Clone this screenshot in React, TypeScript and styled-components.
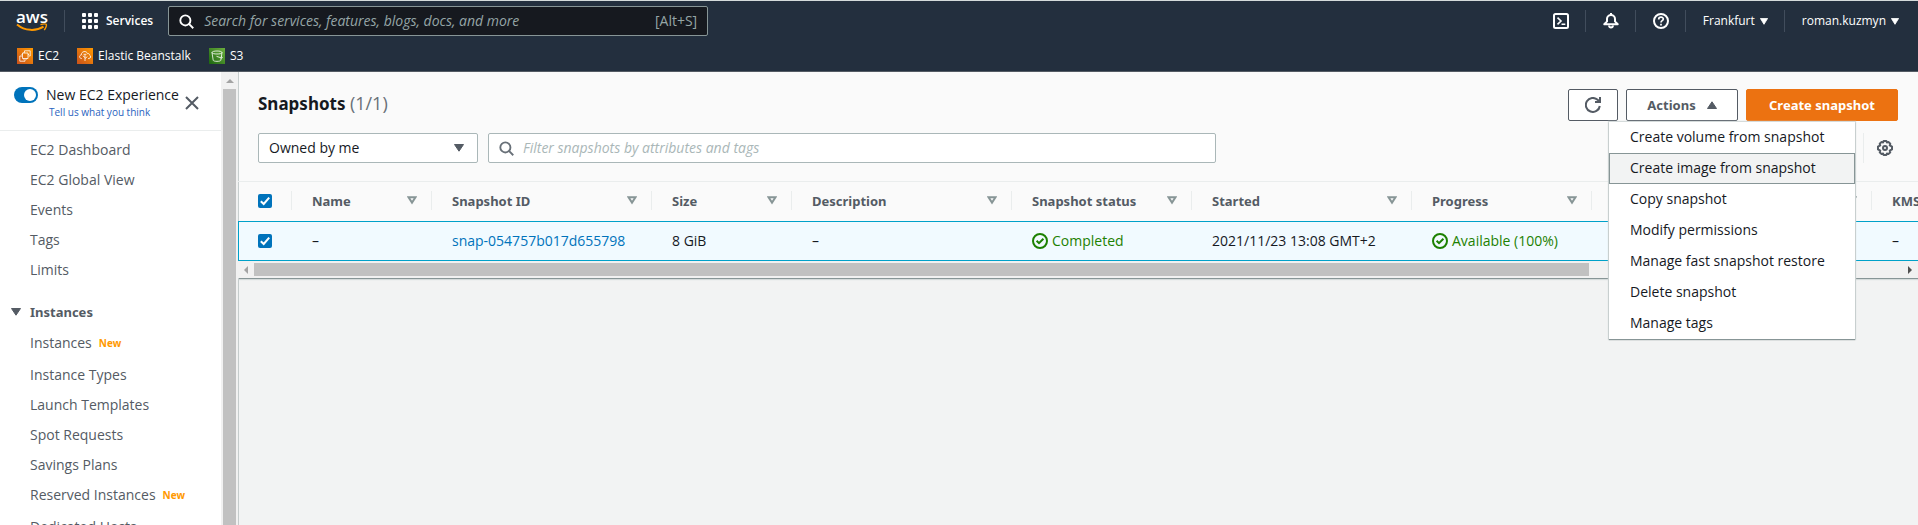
import React from "react";
import styled, { createGlobalStyle, css } from "styled-components";

const GlobalStyle = createGlobalStyle`
  *, *::before, *::after { box-sizing: border-box; }
  html, body { margin: 0; padding: 0; }
  body {
    font-family: "Open Sans", "Noto Sans", sans-serif;
    font-size: 14px;
    line-height: 20px;
    color: #16191f;
    background: #f2f3f3;
    overflow: hidden;
  }
  button, input, select { font: inherit; color: inherit; }
  button { cursor: pointer; }
  a { text-decoration: none; }
  svg { display: block; flex: none; }
`;

const strongText = css`
  font-family: "Noto Sans", "Open Sans", sans-serif;
  font-size: 13px;
  font-weight: 700;
`;

const Page = styled.div`
  display: flex;
  flex-direction: column;
  height: 100vh;
`;

/* ---------- Top navigation ---------- */

const Header = styled.header`
  flex: none;
  background: #232f3e;
  color: #ffffff;
  border-top: 1px solid #d5dbdb;
  border-bottom: 1px solid #545b64;
`;

const NavBar = styled.div`
  display: flex;
  align-items: center;
  justify-content: space-between;
  height: 40px;
  padding: 0 19px 0 16px;
`;

const NavGroup = styled.div`
  display: flex;
  align-items: center;
`;

const Logo = styled.a`
  display: flex;
  flex-direction: column;
  align-items: center;
  width: 32px;
  margin-right: 16px;
  color: #ffffff;
  font-size: 17px;
  font-weight: 600;
  line-height: 12px;
`;

const Separator = styled.span`
  width: 1px;
  height: 22px;
  background: #414d5c;
`;

const NavButton = styled.button<{ $bold?: boolean; $pad?: string }>`
  display: flex;
  align-items: center;
  gap: ${(p) => (p.$bold ? "8px" : "5px")};
  padding: ${(p) => p.$pad ?? "0 16px 0 17px"};
  border: 0;
  background: none;
  font-size: 12px;
  font-weight: ${(p) => (p.$bold ? 600 : 500)};
  line-height: 16px;
`;

const GlobalSearch = styled.label`
  display: flex;
  align-items: center;
  gap: 10px;
  width: 540px;
  height: 30px;
  padding: 0 10px;
  border: 1px solid #879596;
  border-radius: 2px;
  background: #16191f;
  color: #95a5a6;
`;

const SearchInput = styled.input<{ $tone: string }>`
  flex: 1;
  min-width: 0;
  padding: 0;
  border: 0;
  outline: 0;
  background: none;
  &::placeholder {
    color: ${(p) => p.$tone};
    font-style: italic;
    opacity: 1;
  }
`;

const Favorites = styled.nav`
  display: flex;
  gap: 18px;
  height: 30px;
  padding: 7px 17px 0;
`;

const Favorite = styled.a`
  display: flex;
  align-items: center;
  gap: 5px;
  height: 16px;
  color: #ffffff;
  font-size: 12px;
  font-weight: 500;
`;

/* ---------- Body ---------- */

const Body = styled.div`
  display: flex;
  flex: 1;
  min-height: 0;
`;

const Sidebar = styled.aside`
  display: flex;
  flex: none;
  width: 238px;
  background: #ffffff;
`;

const SidebarContent = styled.div`
  flex: 1;
  overflow: hidden;
`;

const VerticalTrack = styled.div`
  display: flex;
  flex-direction: column;
  align-items: center;
  width: 17px;
  background: #f1f1f1;
`;

const VerticalThumb = styled.div`
  flex: 1;
  width: 13px;
  background: #c1c1c1;
`;

const ArrowBox = styled.span`
  display: flex;
  align-items: center;
  justify-content: center;
  flex: none;
  width: 16px;
  height: 17px;
`;

const Experience = styled.div`
  display: flex;
  align-items: flex-start;
  height: 59px;
  padding: 13px 0 0 14px;
  border-bottom: 1px solid #eaeded;
`;

const Toggle = styled.input`
  appearance: none;
  display: flex;
  align-items: center;
  justify-content: flex-end;
  width: 24px;
  height: 16px;
  margin: 2px 8px 0 0;
  padding: 2px;
  border-radius: 8px;
  background: #0073bb;
  &::after {
    content: "";
    width: 12px;
    height: 12px;
    border-radius: 6px;
    background: #ffffff;
  }
`;

const ExperienceText = styled.div`
  display: flex;
  flex-direction: column;
  width: 139px;
  white-space: nowrap;
`;

const FeedbackLink = styled.a`
  padding-left: 3px;
  color: #2a63c0;
  font-size: 10px;
  line-height: 14px;
`;

const IconButton = styled.button`
  padding: 0;
  border: 0;
  background: none;
  color: #545b64;
`;

const CloseButton = styled(IconButton)`
  margin-top: 11px;
`;

const SideList = styled.ul<{ $top?: number }>`
  margin: 0;
  padding: ${(p) => p.$top ?? 4}px 0 0 30px;
  list-style: none;
`;

const SideItem = styled.li<{ $tagged?: boolean }>`
  display: flex;
  align-items: center;
  gap: 7px;
  height: ${(p) => (p.$tagged ? 32 : 30)}px;
  padding-bottom: ${(p) => (p.$tagged ? 2 : 0)}px;
  color: #545b64;
  white-space: nowrap;
`;

const SideLink = styled.a`
  color: #545b64;
`;

const SideHeading = styled.button`
  display: flex;
  align-items: center;
  gap: 9px;
  margin-top: 17px;
  padding: 0 0 0 11px;
  border: 0;
  background: none;
  color: #545b64;
  ${strongText}
`;

const NewTag = styled.span`
  color: #ff9900;
  font-size: 10px;
  font-weight: 700;
`;

const Main = styled.main`
  flex: 1;
  min-width: 0;
  border-left: 1px solid #c5cccc;
`;

const Panel = styled.section`
  border-bottom: 1px solid #879596;
  box-shadow: 0 1px 1px #d5dbdb;
  background: #fafafa;
`;

const PanelHeader = styled.div`
  display: flex;
  align-items: flex-start;
  justify-content: space-between;
  padding: 17px 20px 0 19px;
`;

const Title = styled.h1`
  margin: 0;
  padding-top: 2px;
  ${strongText}
  font-size: 17px;
  line-height: 24px;
`;

const Counter = styled.span`
  color: #687078;
  font-family: "Open Sans", sans-serif;
  font-size: 18px;
  font-weight: 400;
`;

const Buttons = styled.div`
  display: flex;
  gap: 8px;
`;

const ActionsWrap = styled.div`
  position: relative;
`;

const Button = styled.button<{ $primary?: boolean; $width: number }>`
  display: flex;
  align-items: center;
  justify-content: center;
  gap: 11px;
  width: ${(p) => p.$width}px;
  height: 32px;
  padding: 0;
  border: 1px solid #545b64;
  border-radius: 2px;
  background: #ffffff;
  color: #545b64;
  ${strongText}
  white-space: nowrap;
  ${(p) =>
    p.$primary &&
    css`
      border-color: #ec7211;
      background: #ec7211;
      color: #ffffff;
    `}
`;

const Menu = styled.ul`
  position: absolute;
  top: 33px;
  right: -117px;
  z-index: 2;
  width: 246px;
  margin: 0;
  padding: 0;
  list-style: none;
  background: #ffffff;
  box-shadow: 0 1px 1px 0 #879596, 0 0 1px 1px #d5dbdb;
`;

const MenuItem = styled.button<{ $active?: boolean }>`
  display: block;
  width: 100%;
  height: 31px;
  padding: 0 20px 2px;
  border: 1px solid ${(p) => (p.$active ? "#879596" : "transparent")};
  background: ${(p) => (p.$active ? "#f2f3f3" : "#ffffff")};
  text-align: left;
  white-space: nowrap;
`;

const Filters = styled.div`
  display: flex;
  align-items: center;
  gap: 10px;
  padding: 12px 25px 18px 19px;
`;

const SelectWrap = styled.div`
  display: grid;
  align-items: center;
  width: 220px;
  height: 30px;
  color: #545b64;
  > * { grid-area: 1 / 1; }
  > svg {
    justify-self: end;
    margin-right: 14px;
    pointer-events: none;
  }
`;

const Select = styled.select`
  appearance: none;
  width: 100%;
  height: 30px;
  padding: 0 10px;
  border: 1px solid #aab7b8;
  border-radius: 2px;
  background: #ffffff;
  color: #16191f;
`;

const FilterBox = styled.label`
  display: flex;
  align-items: center;
  gap: 9px;
  flex: 0 1 728px;
  height: 30px;
  padding: 0 10px;
  border: 1px solid #aab7b8;
  border-radius: 2px;
  background: #ffffff;
  color: #545b64;
`;

const Preferences = styled.div`
  display: flex;
  align-items: center;
  height: 30px;
  margin-left: auto;
  padding-left: 13px;
  border-left: 1px solid #eaeded;
`;

const TableClip = styled.div`
  overflow: hidden;
  margin-left: -1px;
  border-top: 1px solid #eaeded;
`;

const Table = styled.table`
  width: 1854px;
  table-layout: fixed;
  border-collapse: separate;
  border-spacing: 0;
`;

const HeadCell = styled.th`
  height: 39px;
  padding: 0 0 2px;
  text-align: left;
  color: #545b64;
  ${strongText}
`;

const HeadInner = styled.div<{ $first?: boolean }>`
  display: flex;
  align-items: center;
  justify-content: space-between;
  height: 19px;
  padding: ${(p) => (p.$first ? "0 0 0 20px" : "0 14px 0 20px")};
  border-right: 1px solid #eaeded;
  white-space: nowrap;
`;

const Cell = styled.td<{ $first?: boolean }>`
  height: 40px;
  padding: ${(p) => (p.$first ? "0 0 0 19px" : "0 0 0 20px")};
  border: solid #00a1c9;
  border-width: ${(p) => (p.$first ? "1px 0 1px 1px" : "1px 0")};
  background: #f1faff;
  white-space: nowrap;
`;

const Checkbox = styled.input`
  appearance: none;
  display: block;
  width: 14px;
  height: 14px;
  margin: 0;
  border-radius: 2px;
  background: #0073bb
    url("data:image/svg+xml,%3Csvg xmlns='http://www.w3.org/2000/svg' viewBox='0 0 14 14'%3E%3Cpath d='M2.8 7.2 5.7 10 11.2 3.6' fill='none' stroke='white' stroke-width='2'/%3E%3C/svg%3E");
`;

const SnapshotLink = styled.a`
  color: #0073bb;
`;

const Status = styled.span`
  display: flex;
  align-items: center;
  gap: 4px;
  color: #1d8102;
`;

const HorizontalTrack = styled.div`
  display: flex;
  align-items: center;
  height: 17px;
  background: #f1f1f1;
`;

const HorizontalRail = styled.div`
  flex: 1;
`;

const HorizontalThumb = styled.div`
  width: 81%;
  height: 13px;
  background: #c1c1c1;
`;

/* ---------- Icons ---------- */

const Smile = () => (
  <svg width="32" height="9" viewBox="0 0 32 9" fill="none" stroke="#ff9900">
    <path d="M1 1.5C9 8.2 20 8.4 27.5 3.6" strokeWidth="2" />
    <path d="M24.5 1.6C27 .8 29.5 .7 30.2 1.3S29.8 5.3 28.2 7" strokeWidth="1.4" />
  </svg>
);

const GridIcon = () => (
  <svg width="16" height="16" viewBox="0 0 16 16" fill="#ffffff">
    {[0, 6, 12].map((y) =>
      [0, 6, 12].map((x) => <rect key={`${x}-${y}`} x={x} y={y} width="4" height="4" rx="1" />)
    )}
  </svg>
);

const SearchIcon = ({ color }: { color: string }) => (
  <svg width="15" height="15" viewBox="0 0 16 16" fill="none" stroke={color} strokeWidth="2">
    <circle cx="6.8" cy="6.8" r="5.4" />
    <path d="M10.6 10.6 15.2 15.2" />
  </svg>
);

const Caret = ({ width = 10, height = 8, up = false }: { width?: number; height?: number; up?: boolean }) => (
  <svg width={width} height={height} viewBox="0 0 10 8" preserveAspectRatio="none" fill="currentColor" stroke="currentColor" strokeLinejoin="round">
    <path d={up ? "M.5 7.5h9L5 .8z" : "M.5 .5h9L5 7.2z"} />
  </svg>
);

const SortIcon = () => (
  <svg width="10" height="9" viewBox="0 0 10 9" fill="none" stroke="#879596" strokeWidth="2">
    <path d="M1.5 1.2h7L5 6.6z" />
  </svg>
);

const CloudShellIcon = () => (
  <svg width="16" height="16" viewBox="0 0 16 16" fill="none" stroke="#ffffff" strokeWidth="2">
    <rect x="1" y="1" width="14" height="14" rx="1.5" />
    <path d="M4.5 4.7 8 8 4.5 11.3M8.5 11.2h3.8" strokeWidth="1.6" />
  </svg>
);

const BellIcon = () => (
  <svg width="16" height="16" viewBox="0 0 16 16" fill="none" stroke="#ffffff" strokeWidth="2" strokeLinejoin="round">
    <path d="M8 0v2M1.3 11.2h13.4L12 8.4V6a4 4 0 0 0-8 0v2.4z" />
    <path d="M6 12.500c.3 2.600 3.700 2.600 4 0" />
  </svg>
);

const HelpIcon = () => (
  <svg width="16" height="16" viewBox="0 0 16 16" fill="none" stroke="#ffffff" strokeWidth="2">
    <circle cx="8" cy="8" r="7" />
    <path d="M5.700 6.400C5.700 3.400 10.300 3.500 10.300 6.100 10.300 7.700 8 7.700 8 9.500M8 10.700v1.800" strokeWidth="1.700" />
  </svg>
);

const CloseIcon = () => (
  <svg width="14" height="14" viewBox="0 0 14 14" stroke="currentColor" strokeWidth="2">
    <path d="M1 1l12 12M13 1 1 13" />
  </svg>
);

const RefreshIcon = () => (
  <svg width="16" height="16" viewBox="0 0 16 16" fill="none" stroke="currentColor" strokeWidth="2">
    <path d="M14.800 9A7 7 0 1 1 12.600 2.800L15 5" />
    <path d="M15 0v5H10" />
  </svg>
);

const GearIcon = () => (
  <svg width="16" height="16" viewBox="0 0 16 16" fill="none" stroke="#545b64">
    <path
      d="M6.600 1h2.800l.5 1.500 1.500-.6 1.900 1.900-.6 1.500 2.300 1.300v2.800l-2.300 1.300.6 1.500-1.900 1.900-1.500-.6-.5 1.500H6.600l-.5-1.500-1.500.6-1.900-1.900.6-1.500L1 9.400V6.600l2.300-1.300-.6-1.500 1.900-1.900 1.500.6z"
      strokeWidth="2"
      strokeLinejoin="round"
    />
    <circle cx="8" cy="8" r="2" strokeWidth="2" />
  </svg>
);

const CheckCircleIcon = () => (
  <svg width="16" height="16" viewBox="0 0 16 16" fill="none" stroke="currentColor" strokeWidth="2">
    <circle cx="8" cy="8" r="7" />
    <path d="M4.600 7.800 7 10.200 11.400 5.800" />
  </svg>
);

const ServiceIcon = ({ kind }: { kind: "ec2" | "beanstalk" | "s3" }) => {
  const s3 = kind === "s3";
  return (
    <svg width="16" height="16" viewBox="0 0 16 16" fill="none" stroke="#ffffff" strokeWidth=".8">
      <defs>
        <linearGradient id={`tile-${kind}`} x1="0" y1="1" x2="1" y2="0">
          <stop offset="0" stopColor={s3 ? "#1b660f" : "#c8511b"} />
          <stop offset="1" stopColor={s3 ? "#6cae3e" : "#ff9900"} />
        </linearGradient>
      </defs>
      <rect width="16" height="16" fill={`url(#tile-${kind})`} stroke="none" />
      {kind === "ec2" && (
        <path d="M5.500 5h5.500v5.500H5.500zM5 8H2.800v5.200H8V11M7.500 4.500V2.800h5.700V8H11.500M6.500 10.500v1M9.500 10.500v1M11 6.500h1M7 4v1M4.500 6.500h1" />
      )}
      {kind === "beanstalk" && (
        <path d="M5 10.500H4.500C2 10.300 2 7.200 4.300 7 4.200 3 9.500 2.300 10.500 5.600c1.500-.5 2 .8 2 1.500 1.700.6 1.500 3.300-.6 3.400H11M8 13V6.500M8 9.500 5.800 7.800M8 10.500l2.300-1.800M6.500 6.300h3" />
      )}
      {s3 && (
        <path d="M3 4.500c0-2 10-2 10 0s-10 2-10 0l1.200 7.800c.4 1.400 7.200 1.400 7.600 0L13 4.500M7.500 8.300l5 1.700c1 .2 1.200-.8-.2-1.700" />
      )}
    </svg>
  );
};

const ScrollArrow = ({ d, color = "#a3a3a3" }: { d: string; color?: string }) => (
  <svg width="8" height="8" viewBox="0 0 8 8" fill={color}>
    <path d={d} />
  </svg>
);

/* ---------- Data ---------- */

const topLinks = ["EC2 Dashboard", "EC2 Global View", "Events", "Tags", "Limits"];

const instanceLinks: { label: string; isNew?: boolean }[] = [
  { label: "Instances", isNew: true },
  { label: "Instance Types" },
  { label: "Launch Templates" },
  { label: "Spot Requests" },
  { label: "Savings Plans" },
  { label: "Reserved Instances", isNew: true },
  { label: "Dedicated Hosts" },
];

const actions = [
  "Create volume from snapshot",
  "Create image from snapshot",
  "Copy snapshot",
  "Modify permissions",
  "Manage fast snapshot restore",
  "Delete snapshot",
  "Manage tags",
];

const columns = [
  { id: "name", label: "Name", width: 140 },
  { id: "snapshot", label: "Snapshot ID", width: 220 },
  { id: "size", label: "Size", width: 140 },
  { id: "description", label: "Description", width: 220 },
  { id: "status", label: "Snapshot status", width: 180 },
  { id: "started", label: "Started", width: 220 },
  { id: "progress", label: "Progress", width: 180 },
  { id: "spare", label: "", width: 280 },
  { id: "kms", label: "KMS key ID", width: 220 },
];

export default function App() {
  return (
    <Page>
      <GlobalStyle />
      <Header>
        <NavBar>
          <NavGroup>
            <Logo href="#" aria-label="AWS home">
              aws
              <Smile />
            </Logo>
            <Separator />
            <NavButton $bold $pad="0 15px 0 17px">
              <GridIcon />
              Services
            </NavButton>
            <GlobalSearch>
              <SearchIcon color="#ffffff" />
              <SearchInput
                $tone="#95a5a6"
                aria-label="Search"
                placeholder="Search for services, features, blogs, docs, and more"
              />
              <span>[Alt+S]</span>
            </GlobalSearch>
          </NavGroup>
          <NavGroup>
            <NavButton aria-label="CloudShell">
              <CloudShellIcon />
            </NavButton>
            <Separator />
            <NavButton aria-label="Notifications">
              <BellIcon />
            </NavButton>
            <Separator />
            <NavButton aria-label="Help">
              <HelpIcon />
            </NavButton>
            <Separator />
            <NavButton>
              Frankfurt
              <Caret width={8} height={7} />
            </NavButton>
            <Separator />
            <NavButton $pad="0 0 0 17px">
              roman.kuzmyn
              <Caret width={8} height={7} />
            </NavButton>
          </NavGroup>
        </NavBar>
        <Favorites>
          <Favorite href="#">
            <ServiceIcon kind="ec2" />
            EC2
          </Favorite>
          <Favorite href="#">
            <ServiceIcon kind="beanstalk" />
            Elastic Beanstalk
          </Favorite>
          <Favorite href="#">
            <ServiceIcon kind="s3" />
            S3
          </Favorite>
        </Favorites>
      </Header>

      <Body>
        <Sidebar>
          <SidebarContent>
            <Experience>
              <Toggle type="checkbox" role="switch" id="experience" defaultChecked />
              <ExperienceText>
                <label htmlFor="experience">New EC2 Experience</label>
                <FeedbackLink href="#">Tell us what you think</FeedbackLink>
              </ExperienceText>
              <CloseButton aria-label="Close navigation">
                <CloseIcon />
              </CloseButton>
            </Experience>
            <SideList>
              {topLinks.map((label) => (
                <SideItem key={label}>
                  <SideLink href="#">{label}</SideLink>
                </SideItem>
              ))}
            </SideList>
            <SideHeading>
              <Caret />
              Instances
            </SideHeading>
            <SideList $top={6}>
              {instanceLinks.map(({ label, isNew }) => (
                <SideItem key={label} $tagged={isNew}>
                  <SideLink href="#">{label}</SideLink>
                  {isNew && <NewTag>New</NewTag>}
                </SideItem>
              ))}
            </SideList>
          </SidebarContent>
          <VerticalTrack>
            <ArrowBox>
              <ScrollArrow d="M0 6h8L4 2z" />
            </ArrowBox>
            <VerticalThumb />
          </VerticalTrack>
        </Sidebar>

        <Main>
          <Panel>
            <PanelHeader>
              <Title>
                Snapshots <Counter>(1/1)</Counter>
              </Title>
              <Buttons>
                <Button $width={50} aria-label="Refresh">
                  <RefreshIcon />
                </Button>
                <ActionsWrap>
                  <Button $width={112} aria-haspopup="true" aria-expanded="true">
                    Actions
                    <Caret up />
                  </Button>
                  <Menu>
                    {actions.map((label, index) => (
                      <li key={label}>
                        <MenuItem $active={index === 1}>{label}</MenuItem>
                      </li>
                    ))}
                  </Menu>
                </ActionsWrap>
                <Button $primary $width={152}>
                  Create snapshot
                </Button>
              </Buttons>
            </PanelHeader>
            <Filters>
              <SelectWrap>
                <Select aria-label="Ownership">
                  <option>Owned by me</option>
                </Select>
                <Caret />
              </SelectWrap>
              <FilterBox>
                <SearchIcon color="#687078" />
                <SearchInput
                  $tone="#aab7b8"
                  aria-label="Filter snapshots"
                  placeholder="Filter snapshots by attributes and tags"
                />
              </FilterBox>
              <Preferences>
                <IconButton aria-label="Preferences">
                  <GearIcon />
                </IconButton>
              </Preferences>
            </Filters>
            <TableClip>
              <Table>
                <colgroup>
                  <col width={54} />
                  {columns.map(({ id, width }) => (
                    <col key={id} width={width} />
                  ))}
                </colgroup>
                <thead>
                  <tr>
                    <HeadCell>
                      <HeadInner $first>
                        <Checkbox type="checkbox" defaultChecked aria-label="Select all" />
                      </HeadInner>
                    </HeadCell>
                    {columns.map(({ id, label }) => (
                      <HeadCell key={id}>
                        <HeadInner>
                          <span>{label}</span>
                          <SortIcon />
                        </HeadInner>
                      </HeadCell>
                    ))}
                  </tr>
                </thead>
                <tbody>
                  <tr>
                    <Cell $first>
                      <Checkbox type="checkbox" defaultChecked aria-label="Select snapshot" />
                    </Cell>
                    <Cell>–</Cell>
                    <Cell>
                      <SnapshotLink href="#">snap-054757b017d655798</SnapshotLink>
                    </Cell>
                    <Cell>8 GiB</Cell>
                    <Cell>–</Cell>
                    <Cell>
                      <Status>
                        <CheckCircleIcon />
                        Completed
                      </Status>
                    </Cell>
                    <Cell>2021/11/23 13:08 GMT+2</Cell>
                    <Cell>
                      <Status>
                        <CheckCircleIcon />
                        Available (100%)
                      </Status>
                    </Cell>
                    <Cell />
                    <Cell>–</Cell>
                  </tr>
                </tbody>
              </Table>
              <HorizontalTrack>
                <ArrowBox>
                  <ScrollArrow d="M6 0v8L2 4z" />
                </ArrowBox>
                <HorizontalRail>
                  <HorizontalThumb />
                </HorizontalRail>
                <ArrowBox>
                  <ScrollArrow d="M2 0v8l4-4z" color="#505050" />
                </ArrowBox>
              </HorizontalTrack>
            </TableClip>
          </Panel>
        </Main>
      </Body>
    </Page>
  );
}
